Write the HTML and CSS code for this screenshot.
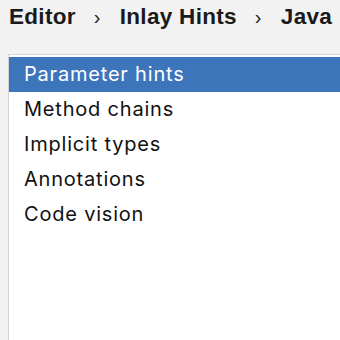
FILE: index.html
```html
<!DOCTYPE html>
<html>
<head>
<meta charset="utf-8">
<link rel="stylesheet" href="styles.css">
</head>
<body>
<div class="crumbs">
  <span class="crumb">Editor</span>
  <span class="sep">›</span>
  <span class="crumb">Inlay Hints</span>
  <span class="sep">›</span>
  <span class="crumb">Java</span>
</div>
<div class="panel">
  <div class="row selected">Parameter hints</div>
  <div class="row">Method chains</div>
  <div class="row">Implicit types</div>
  <div class="row">Annotations</div>
  <div class="row">Code vision</div>
</div>
</body>
</html>
```
FILE: styles.css
```css
html, body {
  margin: 0;
  padding: 0;
  background: #f2f2f2;
  overflow: hidden;
  height: 340px;
}
.crumbs {
  display: flex;
  align-items: center;
  padding-left: 9px;
  height: 34px;
  line-height: 34px;
  font-family: "Liberation Sans", Arial, sans-serif;
  font-weight: bold;
  font-size: 22.5px;
  letter-spacing: 0.3px;
  color: #1a1a1a;
  white-space: nowrap;
}
.sep {
  font-weight: normal;
  font-size: 20px;
  margin: 0 19px 0 18px;
  color: #222;
}
.panel {
  margin: 20px 0 0 8px;
  border-left: 1px solid #d4d4d4;
  border-top: 1px solid #d4d4d4;
  background: #fff;
  padding-top: 2px;
  height: 300px;
  font-family: "Inter", "Liberation Sans", sans-serif;
  font-size: 20px;
  letter-spacing: 0.8px;
  color: #111;
}
.row {
  height: 35px;
  line-height: 35px;
  padding-left: 15px;
}
.row.selected {
  background: #3d75bb;
  color: #fff;
}
```
